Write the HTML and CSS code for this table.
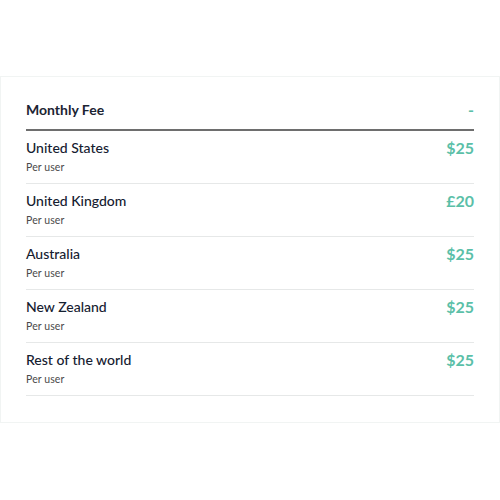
FILE: index.html
```html
<!DOCTYPE html>
<html>
<head>
<meta charset="utf-8">
<link rel="stylesheet" href="styles.css">
</head>
<body>
<div class="card">
  <div class="head">
    <span class="head-title">Monthly Fee</span>
    <span class="price">-</span>
  </div>
  <div class="row">
    <div class="info"><div class="name">United States</div><div class="sub">Per user</div></div>
    <span class="price">$25</span>
  </div>
  <div class="row">
    <div class="info"><div class="name">United Kingdom</div><div class="sub">Per user</div></div>
    <span class="price">£20</span>
  </div>
  <div class="row">
    <div class="info"><div class="name">Australia</div><div class="sub">Per user</div></div>
    <span class="price">$25</span>
  </div>
  <div class="row">
    <div class="info"><div class="name">New Zealand</div><div class="sub">Per user</div></div>
    <span class="price">$25</span>
  </div>
  <div class="row">
    <div class="info"><div class="name">Rest of the world</div><div class="sub">Per user</div></div>
    <span class="price">$25</span>
  </div>
</div>
</body>
</html>
```

FILE: styles.css
```css
html, body { margin: 0; padding: 0; background: #fff; }
body { font-family: Lato, "Open Sans", sans-serif; color: #1b2433; }
.card {
  margin: 76px 0 0 0;
  height: 347px;
  box-sizing: border-box;
  border: 1px solid #f1f4f3;
  padding: 0 25px 0 25px;
}
.head {
  display: flex;
  justify-content: space-between;
  align-items: center;
  padding-top: 23px;
  padding-bottom: 9px;
  border-bottom: 2px solid #6e6e6e;
  line-height: 20px;
}
.head-title { font-size: 14px; font-weight: 700; }
.row {
  display: flex;
  justify-content: space-between;
  align-items: flex-start;
  padding: 8px 0 9px;
  border-bottom: 1px solid #e6e8e8;
}
.info { display: flex; flex-direction: column; gap: 3px; }
.name { font-size: 14px; font-weight: 500; line-height: 18px; color: #152030; }
.sub { font-size: 10.5px; line-height: 14px; color: #4a4a4a; letter-spacing: 0.1px; }
.price {
  color: #5bbfa8;
  font-weight: 700;
  font-size: 16px;
  line-height: 18px;
}
```
